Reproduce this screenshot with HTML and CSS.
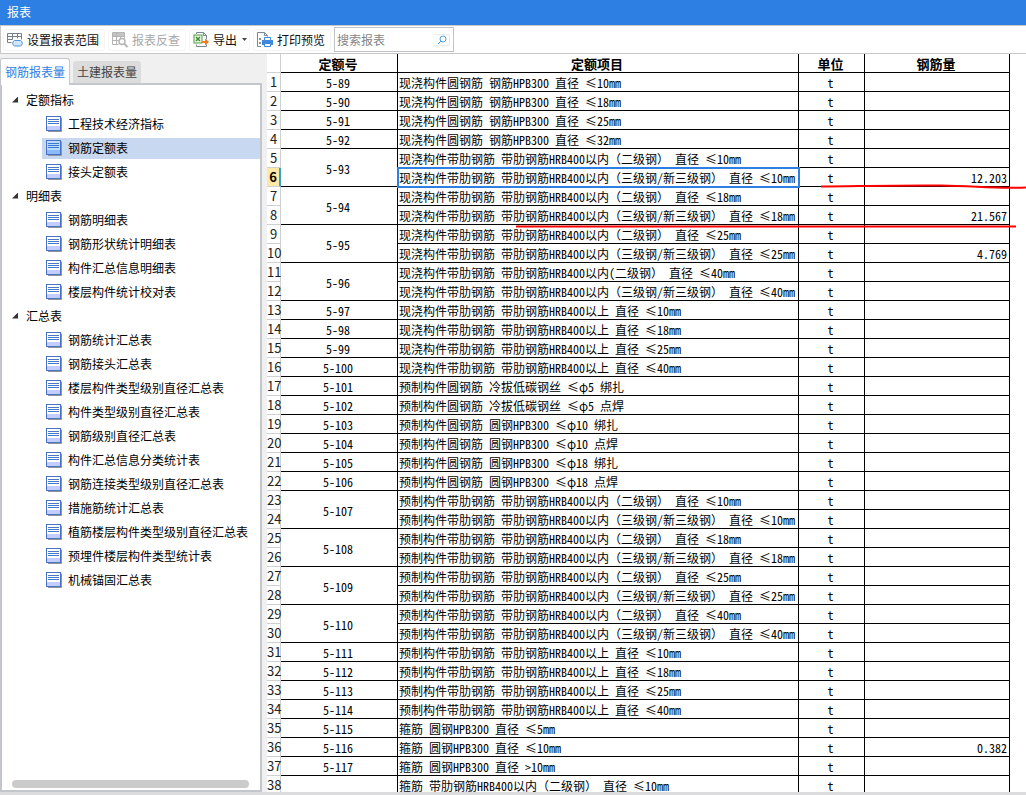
FILE: index.html
```html
<!DOCTYPE html>
<html lang="zh-CN">
<head>
<meta charset="utf-8">
<title>报表</title>
<link rel="stylesheet" href="styles.css">
</head>
<body>
<svg width="0" height="0" class="defs" aria-hidden="true">
  <symbol id="doc" viewBox="0 0 16 16">
    <path d="M2 15.5h13.5V1.5" fill="none" stroke="#8f959f"/>
    <rect x="0.5" y="0.5" width="14" height="14" fill="var(--top)" stroke="#4a72c4"/>
    <rect x="1" y="10" width="13" height="4" fill="var(--foot)"/>
    <path d="M2 3.5h11M2 5.5h11M2 7.5h11" stroke="var(--rule)"/>
  </symbol>
</svg>
<header class="title">报表</header>
<div class="toolbar">
  <button class="tool" type="button">
    <svg width="17" height="16" viewBox="0 0 17 16" fill="none">
      <path d="M.5 1.5h14v6M.5 1.5v9h4M.5 4.5h14M.5 7.5h5M5.500 1.500v6M10.500 1.500v5" stroke="#74808e"/>
      <path d="M7.500 8.500h6a3 3 0 0 1 0 5.500h-6a3 3 0 0 1 0-5.500z" fill="#d3e6fb" stroke="#4e93dc"/>
    </svg>
    设置报表范围
  </button>
  <button class="tool off" type="button">
    <svg width="17" height="16" viewBox="0 0 17 16" fill="none">
      <path d="M1 1h11v3H1z" fill="#c4c4c4"/>
      <path d="M.5.5h12v6M.5.500v12h6M.5 4.500h12M.5 8.500h6M4.500.500v12M8.500 4.500v2" stroke="#b4b4b4"/>
      <circle cx="10" cy="9.500" r="3" fill="#fff" stroke="#b4b4b4" stroke-width="1.500"/>
      <path d="M12.500 12l3 3" stroke="#b4b4b4" stroke-width="2"/>
    </svg>
    报表反查
  </button>
  <button class="tool menu" type="button">
    <svg width="17" height="16" viewBox="0 0 17 16" fill="none">
      <path d="M3.500 2V.5h7l3 3v4M10.500.500v3h3M3.500 12.500v2h10v-2" stroke="#7d8793"/>
      <rect x="1" y="3" width="8" height="8" fill="#eef7ea" stroke="#4e9b3f"/>
      <path d="M3 5l4 4M7 5L3 9" stroke="#3f8f30" stroke-width="1.500"/>
      <path d="M9 9h3V6.500l4 3.500-4 3.500V11H9z" fill="#f07a23"/>
    </svg>
    导出
    <svg class="caret" width="5" height="4" viewBox="0 0 5 4"><path d="M0 0h5L2.500 3z" fill="#444"/></svg>
  </button>
  <button class="tool" type="button">
    <svg width="17" height="16" viewBox="0 0 17 16" fill="none">
      <path d="M4 14.500H.5V.5h7l3 3v1M7.500.500v3h3" stroke="#7d8793"/>
      <path d="M2 6h2v2H2zM2 10h2v2H2z" fill="#8a939d"/>
      <path d="M5 8h11v5H5z" fill="#3f88dd"/>
      <path d="M7.500 5.500h6v3h-6zM7.500 11.500h6v3h-6z" fill="#fff" stroke="#3f88dd"/>
    </svg>
    打印预览
  </button>
  <div class="search">
    <input type="text" aria-label="搜索报表" placeholder="搜索报表">
    <button type="button" aria-label="搜索"><svg width="10" height="10" viewBox="0 0 10 10" fill="none" stroke="#4e9fe0"><circle cx="6" cy="4" r="3"/><path d="M4 6L1 9"/></svg></button>
  </div>
</div>
<main class="main">
  <aside class="side">
    <div class="tabs" role="tablist">
      <button class="tab on" type="button" role="tab" aria-selected="true">钢筋报表量</button>
      <button class="tab" type="button" role="tab" aria-selected="false">土建报表量</button>
    </div>
    <nav class="panel">
      <div class="tree">
      <button class="group" type="button">定额指标</button>
      <button class="item" type="button"><svg class="doc"><use href="#doc"/></svg>工程技术经济指标</button>
      <button class="item sel" type="button"><svg class="doc"><use href="#doc"/></svg>钢筋定额表</button>
      <button class="item" type="button"><svg class="doc"><use href="#doc"/></svg>接头定额表</button>
      <button class="group" type="button">明细表</button>
      <button class="item" type="button"><svg class="doc"><use href="#doc"/></svg>钢筋明细表</button>
      <button class="item" type="button"><svg class="doc"><use href="#doc"/></svg>钢筋形状统计明细表</button>
      <button class="item" type="button"><svg class="doc"><use href="#doc"/></svg>构件汇总信息明细表</button>
      <button class="item" type="button"><svg class="doc"><use href="#doc"/></svg>楼层构件统计校对表</button>
      <button class="group" type="button">汇总表</button>
      <button class="item" type="button"><svg class="doc"><use href="#doc"/></svg>钢筋统计汇总表</button>
      <button class="item" type="button"><svg class="doc"><use href="#doc"/></svg>钢筋接头汇总表</button>
      <button class="item" type="button"><svg class="doc"><use href="#doc"/></svg>楼层构件类型级别直径汇总表</button>
      <button class="item" type="button"><svg class="doc"><use href="#doc"/></svg>构件类型级别直径汇总表</button>
      <button class="item" type="button"><svg class="doc"><use href="#doc"/></svg>钢筋级别直径汇总表</button>
      <button class="item" type="button"><svg class="doc"><use href="#doc"/></svg>构件汇总信息分类统计表</button>
      <button class="item" type="button"><svg class="doc"><use href="#doc"/></svg>钢筋连接类型级别直径汇总表</button>
      <button class="item" type="button"><svg class="doc"><use href="#doc"/></svg>措施筋统计汇总表</button>
      <button class="item" type="button"><svg class="doc"><use href="#doc"/></svg>植筋楼层构件类型级别直径汇总表</button>
      <button class="item" type="button"><svg class="doc"><use href="#doc"/></svg>预埋件楼层构件类型统计表</button>
      <button class="item" type="button"><svg class="doc"><use href="#doc"/></svg>机械锚固汇总表</button>
      </div>
      <div class="scroll"></div>
    </nav>
  </aside>
  <section class="sheet">
    <table class="grid">
      <colgroup><col class="c-no"><col class="c-code"><col><col class="c-unit"><col class="c-qty"></colgroup>
      <thead><tr><th class="no"></th><th>定额号</th><th>定额项目</th><th>单位</th><th>钢筋量</th></tr></thead>
      <tbody>
      <tr><th class="no">1</th><td>5-89</td><td class="name">现浇构件圆钢筋 钢筋HPB300 直径 ≤10mm</td><td>t</td><td></td></tr>
      <tr><th class="no">2</th><td>5-90</td><td class="name">现浇构件圆钢筋 钢筋HPB300 直径 ≤18mm</td><td>t</td><td></td></tr>
      <tr><th class="no">3</th><td>5-91</td><td class="name">现浇构件圆钢筋 钢筋HPB300 直径 ≤25mm</td><td>t</td><td></td></tr>
      <tr><th class="no">4</th><td>5-92</td><td class="name">现浇构件圆钢筋 钢筋HPB300 直径 ≤32mm</td><td>t</td><td></td></tr>
      <tr><th class="no">5</th><td rowspan="2">5-93</td><td class="name">现浇构件带肋钢筋 带肋钢筋HRB400以内（二级钢） 直径 ≤10mm</td><td>t</td><td></td></tr>
      <tr><th class="no cur">6</th><td class="name active">现浇构件带肋钢筋 带肋钢筋HRB400以内（三级钢/新三级钢） 直径 ≤10mm</td><td>t</td><td class="qty">12.203</td></tr>
      <tr><th class="no">7</th><td rowspan="2">5-94</td><td class="name">现浇构件带肋钢筋 带肋钢筋HRB400以内（二级钢） 直径 ≤18mm</td><td>t</td><td></td></tr>
      <tr><th class="no">8</th><td class="name">现浇构件带肋钢筋 带肋钢筋HRB400以内（三级钢/新三级钢） 直径 ≤18mm</td><td>t</td><td class="qty">21.567</td></tr>
      <tr><th class="no">9</th><td rowspan="2">5-95</td><td class="name">现浇构件带肋钢筋 带肋钢筋HRB400以内（二级钢） 直径 ≤25mm</td><td>t</td><td></td></tr>
      <tr><th class="no">10</th><td class="name">现浇构件带肋钢筋 带肋钢筋HRB400以内（三级钢/新三级钢） 直径 ≤25mm</td><td>t</td><td class="qty">4.769</td></tr>
      <tr><th class="no">11</th><td rowspan="2">5-96</td><td class="name">现浇构件带肋钢筋 带肋钢筋HRB400以内(二级钢） 直径 ≤40mm</td><td>t</td><td></td></tr>
      <tr><th class="no">12</th><td class="name">现浇构件带肋钢筋 带肋钢筋HRB400以内（三级钢/新三级钢） 直径 ≤40mm</td><td>t</td><td></td></tr>
      <tr><th class="no">13</th><td>5-97</td><td class="name">现浇构件带肋钢筋 带肋钢筋HRB400以上 直径 ≤10mm</td><td>t</td><td></td></tr>
      <tr><th class="no">14</th><td>5-98</td><td class="name">现浇构件带肋钢筋 带肋钢筋HRB400以上 直径 ≤18mm</td><td>t</td><td></td></tr>
      <tr><th class="no">15</th><td>5-99</td><td class="name">现浇构件带肋钢筋 带肋钢筋HRB400以上 直径 ≤25mm</td><td>t</td><td></td></tr>
      <tr><th class="no">16</th><td>5-100</td><td class="name">现浇构件带肋钢筋 带肋钢筋HRB400以上 直径 ≤40mm</td><td>t</td><td></td></tr>
      <tr><th class="no">17</th><td>5-101</td><td class="name">预制构件圆钢筋 冷拔低碳钢丝 ≤φ5 绑扎</td><td>t</td><td></td></tr>
      <tr><th class="no">18</th><td>5-102</td><td class="name">预制构件圆钢筋 冷拔低碳钢丝 ≤φ5 点焊</td><td>t</td><td></td></tr>
      <tr><th class="no">19</th><td>5-103</td><td class="name">预制构件圆钢筋 圆钢HPB300 ≤φ10 绑扎</td><td>t</td><td></td></tr>
      <tr><th class="no">20</th><td>5-104</td><td class="name">预制构件圆钢筋 圆钢HPB300 ≤φ10 点焊</td><td>t</td><td></td></tr>
      <tr><th class="no">21</th><td>5-105</td><td class="name">预制构件圆钢筋 圆钢HPB300 ≤φ18 绑扎</td><td>t</td><td></td></tr>
      <tr><th class="no">22</th><td>5-106</td><td class="name">预制构件圆钢筋 圆钢HPB300 ≤φ18 点焊</td><td>t</td><td></td></tr>
      <tr><th class="no">23</th><td rowspan="2">5-107</td><td class="name">预制构件带肋钢筋 带肋钢筋HRB400以内（二级钢） 直径 ≤10mm</td><td>t</td><td></td></tr>
      <tr><th class="no">24</th><td class="name">预制构件带肋钢筋 带肋钢筋HRB400以内（三级钢/新三级钢） 直径 ≤10mm</td><td>t</td><td></td></tr>
      <tr><th class="no">25</th><td rowspan="2">5-108</td><td class="name">预制构件带肋钢筋 带肋钢筋HRB400以内（二级钢） 直径 ≤18mm</td><td>t</td><td></td></tr>
      <tr><th class="no">26</th><td class="name">预制构件带肋钢筋 带肋钢筋HRB400以内（三级钢/新三级钢） 直径 ≤18mm</td><td>t</td><td></td></tr>
      <tr><th class="no">27</th><td rowspan="2">5-109</td><td class="name">预制构件带肋钢筋 带肋钢筋HRB400以内（二级钢） 直径 ≤25mm</td><td>t</td><td></td></tr>
      <tr><th class="no">28</th><td class="name">预制构件带肋钢筋 带肋钢筋HRB400以内（三级钢/新三级钢） 直径 ≤25mm</td><td>t</td><td></td></tr>
      <tr><th class="no">29</th><td rowspan="2">5-110</td><td class="name">预制构件带肋钢筋 带肋钢筋HRB400以内（二级钢） 直径 ≤40mm</td><td>t</td><td></td></tr>
      <tr><th class="no">30</th><td class="name">预制构件带肋钢筋 带肋钢筋HRB400以内（三级钢/新三级钢） 直径 ≤40mm</td><td>t</td><td></td></tr>
      <tr><th class="no">31</th><td>5-111</td><td class="name">预制构件带肋钢筋 带肋钢筋HRB400以上 直径 ≤10mm</td><td>t</td><td></td></tr>
      <tr><th class="no">32</th><td>5-112</td><td class="name">预制构件带肋钢筋 带肋钢筋HRB400以上 直径 ≤18mm</td><td>t</td><td></td></tr>
      <tr><th class="no">33</th><td>5-113</td><td class="name">预制构件带肋钢筋 带肋钢筋HRB400以上 直径 ≤25mm</td><td>t</td><td></td></tr>
      <tr><th class="no">34</th><td>5-114</td><td class="name">预制构件带肋钢筋 带肋钢筋HRB400以上 直径 ≤40mm</td><td>t</td><td></td></tr>
      <tr><th class="no">35</th><td>5-115</td><td class="name">箍筋 圆钢HPB300 直径 ≤5mm</td><td>t</td><td></td></tr>
      <tr><th class="no">36</th><td>5-116</td><td class="name">箍筋 圆钢HPB300 直径 ≤10mm</td><td>t</td><td class="qty">0.382</td></tr>
      <tr><th class="no">37</th><td>5-117</td><td class="name">箍筋 圆钢HPB300 直径 &gt;10mm</td><td>t</td><td></td></tr>
      <tr><th class="no">38</th><td rowspan="2">5-118</td><td class="name">箍筋 带肋钢筋HRB400以内（二级钢） 直径 ≤10mm</td><td>t</td><td></td></tr>
      <tr><th class="no"></th><td></td><td></td><td></td></tr>
      </tbody>
    </table>
    <svg class="marks" width="510" height="60" viewBox="0 0 510 60" fill="none" stroke="#f00" stroke-width="2">
      <path d="M305 12.500C350 12 390 11 425 11.500S480 15 510 13.500"/>
      <path d="M0 52.500h500"/>
    </svg>
  </section>
</main>
</body>
</html>
```
FILE: styles.css
```css
* { box-sizing: border-box; }
body {
  margin: 0;
  height: 100vh;
  display: flex;
  flex-direction: column;
  overflow: hidden;
  background: #f0f0f0;
  border-bottom: 3px solid #dcdcde;
  font: 12px/16px "Noto Sans CJK SC", sans-serif;
  color: #111;
}
.defs { position: absolute; }
button, input { font: inherit; color: inherit; }
button { padding: 0; border: 0; background: none; white-space: nowrap; }

.title {
  flex: none;
  height: 25px;
  padding: 0 7px;
  line-height: 24px;
  background: #2d7fe3;
  color: #fff;
}
.toolbar {
  flex: none;
  height: 29px;
  display: flex;
  align-items: center;
  gap: 3px;
  padding: 0 2px;
  background: #fff;
  border: solid #c8c8c8;
  border-width: 1px 0 1px 1px;
}
.tool {
  height: 22px;
  display: flex;
  align-items: center;
  gap: 3px;
  padding: 0 5px 0 3px;
  border: 1px solid #f5f5f5;
  border-radius: 3px;
}
.tool.menu { padding-right: 2px; }
.off { color: #a8a8a8; }
.caret { margin-left: 2px; }
.search {
  width: 120px;
  height: 25px;
  display: flex;
  align-items: center;
  padding: 0 3px 0 2px;
  border: 1px solid #c0c4c8;
}
.search input {
  flex: 1;
  min-width: 0;
  padding: 0;
  border: 0;
  outline: 0;
}
.search input::placeholder { color: #858585; opacity: 1; }
.search button {
  width: 16px;
  height: 12px;
  display: grid;
  place-items: center;
  border: solid #ececec;
  border-width: 1px 1px 1px 0;
}

.main { flex: 1; min-height: 0; display: flex; gap: 5px; }
.side { flex: none; width: 262px; display: flex; flex-direction: column; padding-top: 4px; }
.tabs { display: flex; align-items: flex-end; gap: 3px; }
.tab {
  height: 22px;
  padding: 0 4px;
  border-radius: 3px 3px 0 0;
  background: #dcdcdc;
  color: #444;
}
.tab.on {
  height: 27px;
  margin-bottom: -2px;
  border: 1px solid #c3c7cc;
  border-bottom: 0;
  background: #fff;
  color: #2d7fe3;
  position: relative;
}
.panel {
  flex: 1;
  min-height: 0;
  display: flex;
  flex-direction: column;
  justify-content: space-between;
  padding: 5px 0 2px;
  border: 2px solid #c3c7cc;
  background: #fff;
}
.tree { display: flex; flex-direction: column; gap: 3px; }
.group, .item { height: 21px; display: flex; align-items: center; padding-bottom: 2px; text-align: left; color: #000; }
.group { gap: 8px; padding-left: 10px; }
.group::before {
  content: "";
  width: 6px;
  height: 6px;
  background: #333;
  clip-path: polygon(100% 0, 100% 100%, 0 100%);
}
.item { gap: 6px; margin-left: 40px; padding-left: 4px; }
.sel { background: #c8d8f0; }
.doc { width: 16px; height: 16px; --top: #fff; --foot: #c2cdfa; --rule: #4a78c8; }
.sel .doc { --top: #b9dcfc; --foot: #8abafa; --rule: #3c78d0; }
.scroll { height: 8px; margin: 0 11px 0 10px; border-radius: 4px; background: #cbcbcb; }

.sheet { flex: 1; min-width: 0; position: relative; overflow: hidden; background: #fff; }
.grid {
  width: calc(100% - 16px);
  table-layout: fixed;
  border-spacing: 0;
  font: 12px/16px "Noto Sans Mono CJK SC", "Noto Sans CJK SC", monospace;
  color: #000;
}
.c-no { width: 14px; }
.c-code { width: 117px; }
.c-unit { width: 66px; }
.c-qty { width: 145px; }
.grid th, .grid td {
  height: 19px;
  padding: 2px 2px 0 0;
  border: solid #000;
  border-width: 0 1px 1px 0;
  text-align: center;
  white-space: nowrap;
  line-height: 16px;
}
.grid thead th { font-size: 13px; }
.grid .name { padding-left: 1px; padding-right: 0; text-align: left; }
.grid .qty { text-align: right; }
.grid .active { outline: 2px solid #2d7fe3; outline-offset: -1px; }
.grid .no {
  padding: 0;
  border-color: #d0d0d0;
  font: 13px/16px "Noto Sans CJK SC", sans-serif;
  color: #222;
}
.grid .cur { background: #ffe9a6; border-right: 2px solid #35a0d0; font-weight: 700; color: #000; }
.marks { position: absolute; left: 249px; top: 120px; }
```
